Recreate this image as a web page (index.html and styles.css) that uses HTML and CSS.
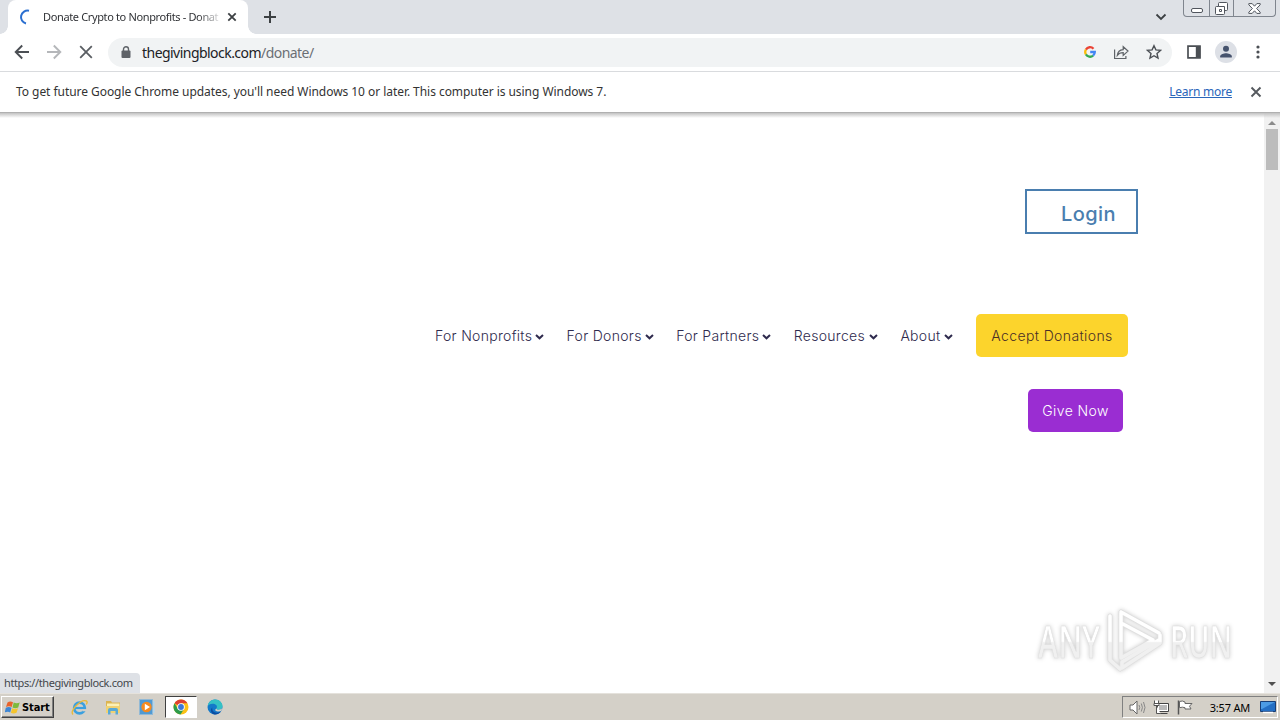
FILE: index.html
```html
<!DOCTYPE html>
<html lang="en">

<head>
  <meta charset="UTF-8">
  <title>Donate Crypto to Nonprofits</title>
  <link rel="stylesheet" href="styles.css">
</head>

<body>
  <div class="tab-strip">
    <div class="tab">
      <svg class="spinner" width="16" height="16" viewBox="0 0 16 16"><path d="M11 1.800A6.500 6.500 0 0 0 8 14.500" fill="none" stroke="#2b6fd0" stroke-width="2"/></svg>
      <span class="tab-title">Donate Crypto to Nonprofits - Donat</span>
      <svg class="tab-close" width="10" height="10" viewBox="0 0 10 10"><path d="M1.300 1.300l7.400 7.400M8.700 1.300L1.300 8.700" stroke="#3c4043" stroke-width="1.800"/></svg>
    </div>
    <svg class="new-tab" width="14" height="14" viewBox="0 0 14 14"><path d="M7 1v12M1 7h12" stroke="#3c4043" stroke-width="2"/></svg>
    <svg class="tab-search" width="12" height="8" viewBox="0 0 12 8"><path d="M1.500 1.500L6 6l4.500-4.500" fill="none" stroke="#3c4043" stroke-width="1.800"/></svg>
    <div class="window-buttons">
      <span class="win-btn min"><svg width="12" height="5" viewBox="0 0 12 5"><rect x=".5" y=".5" width="11" height="4" rx="1.500" fill="#fff" stroke="#50555d"/></svg></span>
      <span class="win-btn max"><svg width="13" height="13" viewBox="0 0 13 13"><path d="M4.500.5h7a1 1 0 0 1 1 1v6a1 1 0 0 1-1 1h-2v3a1 1 0 0 1-1 1h-7a1 1 0 0 1-1-1v-6a1 1 0 0 1 1-1h2v-3a1 1 0 0 1 1-1z" fill="#fff" stroke="#50555d"/><path d="M3.500 4.500h6v5M4.500 7.500h2v2h-2z" fill="none" stroke="#50555d"/></svg></span>
      <span class="win-btn close"><svg width="13" height="11" viewBox="0 0 13 11"><path d="M.8.6h3.400l2.300 2.600L8.800.6h3.400v1.200L8.600 5.500l3.600 3.700v1.200H8.800L6.500 7.800l-2.300 2.600H.8V9.200l3.600-3.700L.8 1.800z" fill="#fff" stroke="#50555d"/></svg></span>
    </div>
  </div>

  <div class="toolbar">
    <svg class="nav-icon" width="16" height="16" viewBox="0 0 16 16"><path d="M15 8H2M8.200 1.500L1.700 8l6.500 6.500" fill="none" stroke="#4b4f54" stroke-width="1.900"/></svg>
    <svg class="nav-icon" width="16" height="16" viewBox="0 0 16 16"><path d="M1 8h13M7.800 1.500L14.300 8l-6.500 6.500" fill="none" stroke="#b5b7ba" stroke-width="1.900"/></svg>
    <svg class="nav-icon" width="16" height="16" viewBox="0 0 16 16"><path d="M2.200 2.200l11.600 11.600M13.800 2.200L2.200 13.800" stroke="#5a5e63" stroke-width="1.800"/></svg>
    <div class="omnibox">
      <svg class="lock" width="10" height="13" viewBox="0 0 10 13"><rect x=".5" y="4.500" width="9" height="7.500" rx="1" fill="#5f6368"/><path d="M2.500 5V3.300a2.500 2.500 0 0 1 5 0V5" fill="none" stroke="#5f6368" stroke-width="1.400"/></svg>
      <span class="url"><b>thegivingblock.com</b>/donate/</span>
      <svg class="google" width="12" height="12" viewBox="0 0 12 12" fill="none" stroke-width="2.300"><path d="M1.900 3.600A4.800 4.800 0 0 1 9.500 2.700" stroke="#ea4335"/><path d="M1.900 3.600a4.800 4.800 0 0 0 0 4.800" stroke="#fbbc05"/><path d="M1.900 8.400a4.800 4.800 0 0 0 7.200 1.200" stroke="#34a853"/><path d="M9.100 9.600A4.800 4.800 0 0 0 10.800 6H6.200" stroke="#4285f4"/></svg>
      <svg class="share" width="16" height="15" viewBox="0 0 16 15" fill="none" stroke="#5f6368" stroke-width="1.200"><path d="M1.600 4.500v9h11.300v-2.500"/><path d="M4.300 10.300c.4-3.600 2.300-5.400 5.900-5.700V1.700l4.800 4.400-4.800 4.400V7.700c-2.700 0-4.500.7-5.900 2.600z"/></svg>
      <svg class="star" width="16" height="16" viewBox="0 0 16 16"><path d="M8 1.700l1.900 4.200 4.600.5L11 9.500l1 4.500-4-2.300L4 14l1-4.500-3.500-3.100 4.600-.5z" fill="none" stroke="#4b4f54" stroke-width="1.400"/></svg>
    </div>
    <svg class="side-panel" width="14" height="14" viewBox="0 0 14 14"><path d="M1 1.200h12v11.600H1z" fill="none" stroke="#4b4f54" stroke-width="1.700"/><path d="M8.800 1h4.400v12H8.800z" fill="#4b4f54"/></svg>
    <svg class="avatar" width="22" height="22" viewBox="0 0 22 22"><circle cx="11" cy="11" r="11" fill="#dde0e6"/><circle cx="11" cy="7.700" r="3" fill="#46536d"/><path d="M5.200 16.500v-1.300c0-2 3.800-3 5.800-3s5.800 1 5.800 3v1.300z" fill="#46536d"/></svg>
    <svg class="menu" width="4" height="14" viewBox="0 0 4 14" fill="#4b4f54"><circle cx="2" cy="2" r="1.600"/><circle cx="2" cy="7" r="1.600"/><circle cx="2" cy="12" r="1.600"/></svg>
  </div>

  <div class="infobar">
    <span class="info-text">To get future Google Chrome updates, you'll need Windows 10 or later. This computer is using Windows 7.</span>
    <a class="learn-more">Learn more</a>
    <svg class="info-close" width="12" height="12" viewBox="0 0 12 12"><path d="M1.500 1.500l9 9M10.500 1.500l-9 9" stroke="#55595e" stroke-width="1.900"/></svg>
  </div>

  <div class="viewport">
    <main class="page">
      <a class="login">Login</a>
      <nav class="site-nav">
        <a class="w-nonprofits"><span>For Nonprofits</span><svg width="9" height="6" viewBox="0 0 9 6"><path d="M1 1l3.500 3.300L8 1"/></svg></a>
        <a class="w-donors"><span>For Donors</span><svg width="9" height="6" viewBox="0 0 9 6"><path d="M1 1l3.500 3.300L8 1"/></svg></a>
        <a class="w-partners"><span>For Partners</span><svg width="9" height="6" viewBox="0 0 9 6"><path d="M1 1l3.500 3.300L8 1"/></svg></a>
        <a class="w-resources"><span>Resources</span><svg width="9" height="6" viewBox="0 0 9 6"><path d="M1 1l3.500 3.300L8 1"/></svg></a>
        <a class="w-about"><span>About</span><svg width="9" height="6" viewBox="0 0 9 6"><path d="M1 1l3.500 3.300L8 1"/></svg></a>
        <a class="btn accept">Accept Donations</a>
      </nav>
      <a class="btn give">Give Now</a>
    </main>
    <div class="scrollbar">
      <svg width="8" height="4" viewBox="0 0 8 4"><path d="M0 4l4-4 4 4z" fill="#8b8b8b"/></svg>
      <div class="thumb"></div>
      <svg class="down" width="8" height="4" viewBox="0 0 8 4"><path d="M0 0l4 4 4-4z" fill="#505050"/></svg>
    </div>
    <div class="status">https://thegivingblock.com</div>
    <svg class="watermark" width="200" height="70" viewBox="0 0 200 70">
      <defs>
        <linearGradient id="fade" gradientUnits="userSpaceOnUse" x1="0" y1="0" x2="0" y2="70"><stop offset=".49" stop-color="#fff"/><stop offset=".51" stop-color="#f0f0f0"/></linearGradient>
      </defs>
      <g class="letters" fill="url(#fade)">
        <text x="2" y="51" textLength="62" lengthAdjust="spacingAndGlyphs">ANY</text>
        <text x="134" y="51" textLength="62" lengthAdjust="spacingAndGlyphs">RUN</text>
      </g>
      <g fill="none" stroke-linejoin="round" stroke-linecap="round">
        <path id="outer" d="M74 9v44l10 9M85 5l38 21M85 5v46l32-18-30-16M124 28v8L86 61v-6l37-22" stroke="#e0e0e0" stroke-width="5"/>
        <path d="M74 9v44l10 9M85 5l38 21M85 5v46l32-18-30-16M124 28v8L86 61v-6l37-22" stroke="url(#fade)" stroke-width="3.500"/>
      </g>
    </svg>
  </div>

  <div class="taskbar">
    <div class="start">
      <svg width="16" height="15" viewBox="0 0 16 15"><path d="M2.500 2.500Q5 .5 8 2.200L6.700 7Q4 5.500 1 7z" fill="#e8632b"/><path d="M8.700 2.500q3 1.500 6 0L13.200 7.500q-3 1.300-5.700 0z" fill="#7dba3b"/><path d="M.8 7.800q3-1.500 5.700 0l-1.300 4.700Q3 11-.3 12.500z" fill="#3d86d4"/><path d="M7.200 8.300q3 1.300 5.800 0l-1.500 4.500q-3 1.500-5.600 0z" fill="#f5c52d"/></svg>
      <b>Start</b>
    </div>
    <div class="quick">
      <span class="app"><svg width="17" height="17" viewBox="0 0 17 17" fill="none"><circle cx="8.500" cy="9" r="5.300" stroke="#3ba0df" stroke-width="2.800"/><path d="M4 9h10" stroke="#3ba0df" stroke-width="2.200"/><path d="M11.500 11.200h4" stroke="#d4d0c8" stroke-width="2.200"/><path d="M2 15.500C-1.500 12 10-.5 15.500 2c1 .6.700 2-.2 3.500" stroke="#e9b93a" stroke-width="1.400"/></svg></span>
      <span class="app"><svg width="16" height="16" viewBox="0 0 16 16"><path d="M1 2h5l1 1.500h8V14H1z" fill="#dcb450"/><path d="M2 4.500h12.500V9H2z" fill="#fbf0b6"/><path d="M1 7h14v7H1z" fill="#f0d272"/><path d="M3 15.500V11q0-2 2-2h6q2 0 2 2v4.500h-2.500V12h-5v3.500z" fill="#58a9d6"/></svg></span>
      <span class="app"><svg width="16" height="16" viewBox="0 0 16 16"><rect x=".5" y=".5" width="13" height="15" fill="#4f9ad4" stroke="#92b9d5"/><path d="M14 2h1.500v12H14z" fill="#b4d5eb"/><circle cx="7.500" cy="8" r="5.200" fill="#f58a1f"/><path d="M5.800 4.800L11 8l-5.200 3.200z" fill="#fff"/></svg></span>
      <span class="app active"><svg width="16" height="16" viewBox="0 0 16 16"><circle cx="8" cy="8" r="7.500" fill="#fbc116"/><path d="M8 8L1.500 4.200A7.500 7.500 0 0 1 14.500 4.300H8z" fill="#dd4132"/><path d="M1.500 4.200a7.500 7.500 0 0 0 6 11.300L11.200 9.800 8 8l-3.200 1.800z" fill="#2d9c4c"/><circle cx="8" cy="8" r="3.800" fill="#fff"/><circle cx="8" cy="8" r="2.900" fill="#3b78d8"/></svg></span>
      <span class="app"><svg width="16" height="16" viewBox="0 0 16 16"><circle cx="8" cy="8" r="7.500" fill="#1479c9"/><path d="M.7 7C1.500 2.500 5 .5 8.300.5c4.500 0 7.200 3.500 7.200 6.500 0 2.300-1.700 3.700-4 3.700-1.500 0-2.500-.6-1.900-1.500C11 6.500 8 4.700 5.500 4.800 3 4.900 1.500 6 .7 7z" fill="#35c1c5"/><path d="M5.300 8.500c-.5 3 1.700 5.500 4.700 5.200 1.500-.1 3-.8 4-1.500-1.500 2.500-4.500 3.500-6.500 3.200C3.500 14.500 3 10.500 5.300 8.500z" fill="#0c4da2"/><path d="M9.600 9.200c-.6.900.4 1.500 1.900 1.500 1.500 0 3-.5 3.700-1.700l-.7 2.700c-1.500 1.200-5 1.200-6.500-.7z" fill="#d4d0c8"/></svg></span>
    </div>
    <div class="tray">
      <svg width="17" height="15" viewBox="0 0 17 15"><path d="M1 5h3l4-4v13l-4-4H1z" fill="#fff" stroke="#666"/><path d="M10 5q1.500 2.500 0 5M12.300 3.500q2.200 4 0 8M14.500 2q3 5.500 0 11" fill="none" stroke="#888"/></svg>
      <svg class="net" width="16" height="15" viewBox="0 0 16 15"><path d="M4.500 3.500h11v8h-11zM7 13.500h7.500" fill="#fff" stroke="#444"/><path d="M6 5h8v5H6z" fill="#b9b9b9"/><path d="M1.500.5v3h4v-3M1 3.500h5v2H1zM3.500 5.500v8h4" fill="#fff" stroke="#555"/></svg>
      <svg class="flag" width="16" height="15" viewBox="0 0 16 15"><path d="M1.500.5v14" stroke="#555" stroke-width="1.500"/><path d="M2.500 1.500q3-1.200 5.500.5v1.500h7L12.500 6.200l1.500 2.800H8V7.700q-2.500-1-5.500 0z" fill="#fff" stroke="#666"/></svg>
      <span class="clock">3:57 AM</span>
      <svg class="desktop" width="16" height="13" viewBox="0 0 16 13"><path d="M.5.500h15v10H.5z" fill="#246fc4" stroke="#173e77"/><path d="M1 1h14L2 8H1z" fill="#4c9be4"/><path d="M3 11.500h10" stroke="#fff" stroke-width="1.500"/></svg>
    </div>
  </div>
</body>

</html>
```
FILE: styles.css
```css
* {
  box-sizing: border-box;
}

body {
  margin: 0;
  width: 1280px;
  height: 720px;
  overflow: hidden;
  display: flex;
  flex-direction: column;
  background: #fff;
  font-family: "Noto Sans", "Open Sans", sans-serif;
  white-space: nowrap;
}

svg {
  display: block;
  flex: none;
}

/* browser chrome */
.tab-strip {
  height: 34px;
  flex: none;
  display: flex;
  align-items: flex-start;
  background: #dee1e6;
}

.tab {
  position: relative;
  width: 240px;
  height: 34px;
  margin-left: 8px;
  padding: 0 11px 0 10px;
  display: flex;
  align-items: center;
  background: #fff;
  border-radius: 8px 8px 0 0;
}

.tab::before,
.tab::after {
  content: "";
  position: absolute;
  bottom: 0;
  width: 8px;
  height: 8px;
}

.tab::before {
  left: -8px;
  background: radial-gradient(circle at 0 0, #dee1e6 7.5px, #fff 8px);
}

.tab::after {
  right: -8px;
  background: radial-gradient(circle at 100% 0, #dee1e6 7.5px, #fff 8px);
}

.tab-title {
  width: 176px;
  margin: 0 8px 2px 9px;
  font-size: 11px;
  letter-spacing: -0.36px;
  color: #303236;
  -webkit-mask-image: linear-gradient(90deg, #000 155px, transparent 180px);
  mask-image: linear-gradient(90deg, #000 155px, transparent 180px);
}

.new-tab {
  margin: 10px 0 0 15px;
}

.tab-search {
  margin: 13px 16px 0 auto;
}

.window-buttons {
  display: flex;
  height: 17px;
  margin-right: 4px;
  border: 1px solid #7f858e;
  border-top: 0;
  border-radius: 0 0 4px 4px;
}

.win-btn {
  display: flex;
  justify-content: center;
  padding-top: 2px;
}

.min {
  width: 25px;
  padding-top: 8px;
}

.max {
  width: 25px;
  border-left: 1px solid #7f858e;
  border-right: 1px solid #7f858e;
}

.close {
  width: 41px;
  padding-top: 3px;
}

.toolbar {
  height: 38px;
  flex: none;
  display: flex;
  align-items: center;
  padding: 0 20px 1px 14px;
  border-bottom: 1px solid #d9dbde;
}

.nav-icon {
  margin-right: 16px;
}

.omnibox {
  width: 1064px;
  height: 29px;
  margin-left: -2px;
  padding: 0 10px 0 13px;
  display: flex;
  align-items: center;
  background: #f1f3f4;
  border-radius: 15px;
}

.url {
  margin: 0 auto 0 11px;
  font-size: 14px;
  letter-spacing: -0.54px;
  color: #6b6f74;
}

.url b {
  font-weight: 400;
  color: #202124;
}

.share {
  margin: 0 17px 0 18px;
}

.google {
  margin-right: -1px;
}

.side-panel {
  margin-left: 15px;
}

.avatar {
  margin-left: 14px;
}

.menu {
  margin-left: auto;
}

.infobar {
  height: 41px;
  flex: none;
  display: flex;
  align-items: center;
  padding: 0 18px 2px 16px;
  border-bottom: 1px solid #b0b0b0;
  font-size: 12px;
  color: #333;
}

.info-text {
  letter-spacing: -0.05px;
}

.learn-more {
  margin: 0 18px 0 auto;
  letter-spacing: -0.25px;
  color: #2a66ba;
  text-decoration: underline;
}

.info-close {
  margin-top: 1px;
}

/* page */
.viewport {
  position: relative;
  height: 580px;
  flex: none;
  display: flex;
}

.viewport::before {
  content: "";
  position: absolute;
  top: 0;
  left: 0;
  right: 0;
  height: 5px;
  background: linear-gradient(#c2c2c2, #fff0);
}

.page {
  width: 1264px;
  padding: 76px 136px 0 435px;
  display: flex;
  flex-direction: column;
  align-items: flex-end;
  font-family: Inter, "Liberation Sans", sans-serif;
}

.login {
  width: 113px;
  height: 45px;
  margin-right: -10px;
  padding-left: 34px;
  border: 2px solid #4a7eaf;
  font-size: 20px;
  font-weight: 500;
  letter-spacing: 0.4px;
  line-height: 46px;
  color: #4a7eaf;
}

.site-nav {
  width: 693px;
  margin-top: 80px;
  display: flex;
  justify-content: space-between;
  align-items: center;
  font-size: 14px;
  font-weight: 300;
  letter-spacing: 0.3px;
  color: #2e2a4d;
}

.site-nav a:not(.btn) {
  display: flex;
  align-items: center;
  justify-content: space-between;
}

.site-nav path {
  fill: none;
  stroke: #2e2a4d;
  stroke-width: 2;
}

.site-nav svg {
  margin-top: 2px;
}

.w-nonprofits {
  width: 109px;
}

.w-donors {
  width: 87px;
}

.w-partners {
  width: 95px;
}

.w-resources {
  width: 84px;
}

.w-about {
  width: 53px;
}

.btn {
  height: 43px;
  border-radius: 5px;
  font-size: 14px;
  font-weight: 300;
  letter-spacing: 0.4px;
  line-height: 43px;
  text-align: center;
}

.accept {
  width: 152px;
  background: #fcd42c;
  color: #4a2f27;
}

.give {
  width: 95px;
  margin: 32px 5px 0 0;
  background: #9a2dd2;
  color: #fff;
}

.scrollbar {
  width: 16px;
  padding: 8px 0 7px;
  display: flex;
  flex-direction: column;
  align-items: center;
  background: #f1f1f1;
}

.thumb {
  width: 12px;
  height: 41px;
  margin-top: 4px;
  background: #bcbcbc;
}

.down {
  margin-top: auto;
}

.status {
  position: absolute;
  left: 0;
  bottom: 0;
  width: 140px;
  height: 20px;
  padding-left: 4px;
  background: #dee1e6;
  border-radius: 0 4px 0 0;
  font-size: 11px;
  letter-spacing: -0.4px;
  line-height: 20px;
  color: #44474b;
}

.watermark {
  position: absolute;
  left: 1036px;
  top: 494px;
  filter: drop-shadow(0 0 2px #ccc);
}

.letters {
  font: 600 46px "Open Sans", "Liberation Sans", sans-serif;
  stroke: #e0e0e0;
  stroke-width: 0.7px;
}

/* taskbar */
.taskbar {
  height: 27px;
  flex: none;
  display: flex;
  align-items: center;
  padding: 0 2px 0 1px;
  background: #d4d0c8;
  border-top: 1px solid #e5e2dc;
}

.start {
  width: 53px;
  height: 22px;
  padding-left: 3px;
  display: flex;
  align-items: center;
  gap: 1px;
  border: 1px solid;
  border-color: #fff #404040 #404040 #fff;
  box-shadow: inset -1px -1px #808080;
  font: 11px "DejaVu Sans Condensed", sans-serif;
  letter-spacing: -0.1px;
  color: #000;
}

.quick {
  display: flex;
  margin-left: 9px;
  gap: 2px;
}

.app {
  width: 32px;
  height: 22px;
  display: flex;
  align-items: center;
  justify-content: center;
}

.active {
  background: #fff;
  border: 1px solid;
  border-color: #404040 #fff #fff #404040;
}

.tray {
  width: 156px;
  height: 22px;
  margin-left: auto;
  padding: 0 1px 0 6px;
  display: flex;
  align-items: center;
  border: 1px solid;
  border-color: #808080 #fff #fff #808080;
  font-size: 11px;
  color: #000;
}

.net {
  margin-left: 7px;
}

.flag {
  margin-left: 8px;
}

.clock {
  margin-left: auto;
  margin-right: 10px;
  letter-spacing: -0.2px;
}
```
